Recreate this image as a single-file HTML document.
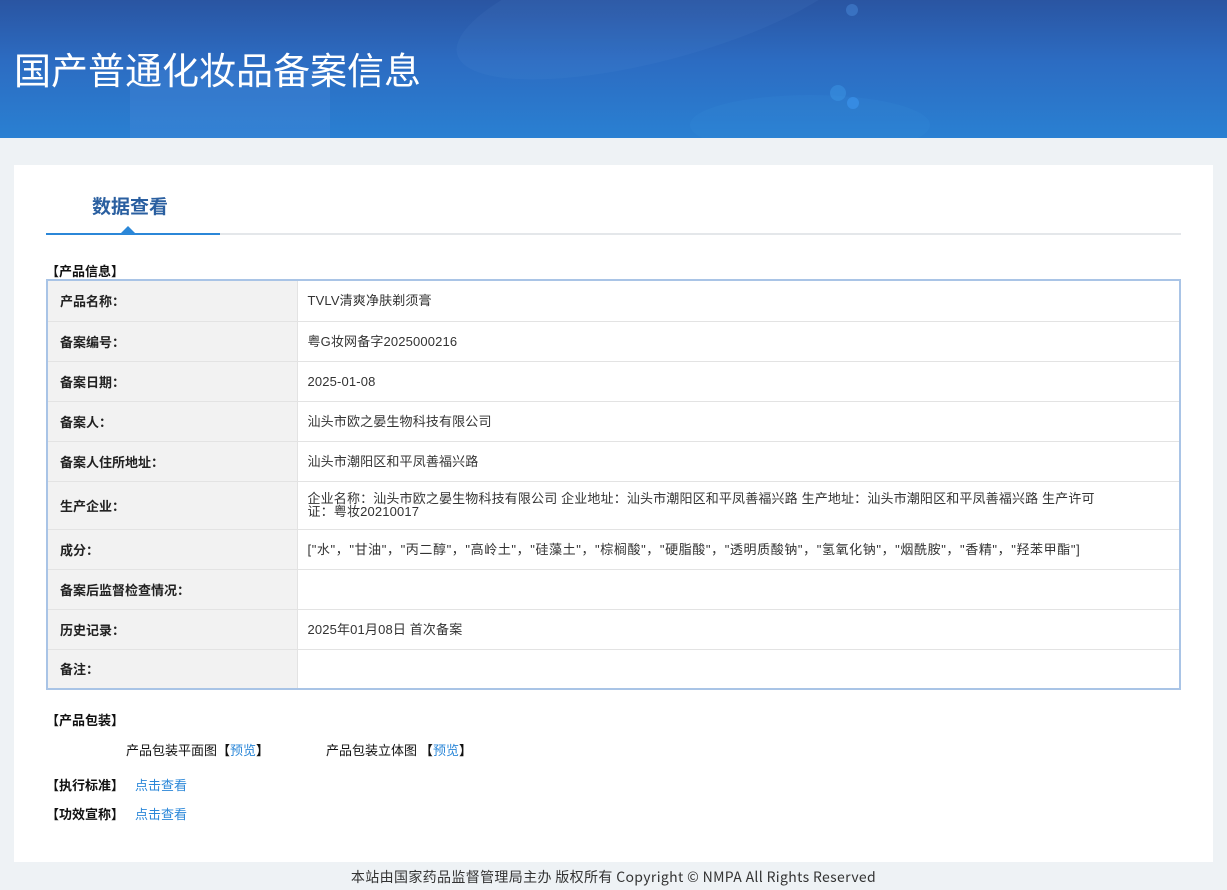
<!DOCTYPE html>
<html><head><meta charset="utf-8"><style>
*{margin:0;padding:0;box-sizing:border-box}
body{width:1227px;height:890px;background:#eef2f5;font-family:"Liberation Sans","Noto Sans CJK SC",sans-serif;position:relative;overflow:hidden;color:#333}
.hd{position:absolute;left:0;top:0;width:1227px;height:138px;background:linear-gradient(180deg,#2a55a2 0%,#2c6cc2 45%,#2a80d2 100%);overflow:hidden}
.hd h1{position:absolute;left:14px;top:41px;font-size:37px;font-weight:normal;color:#fff;font-family:"Noto Sans CJK SC",sans-serif}
.blob{position:absolute;border-radius:50%}
.panel{position:absolute;left:14px;top:165px;width:1199px;height:697px;background:#fff}
.tab{position:absolute;left:92px;top:192px;font-size:19px;font-weight:bold;color:#2a5fa0;font-family:"Noto Sans CJK SC",sans-serif}
.line{position:absolute;left:46px;top:233px;width:1135px;height:2px;background:#e4e7ea}
.line2{position:absolute;left:46px;top:233px;width:174px;height:2px;background:#2b87d8}
.tri{position:absolute;left:121px;top:226px;width:0;height:0;border-left:7px solid transparent;border-right:7px solid transparent;border-bottom:7px solid #2b87d8}
.sec{position:absolute;font-size:13px;font-weight:bold;color:#111;font-family:"Noto Sans CJK SC",sans-serif}
table{position:absolute;left:46px;top:279px;width:1135px;border-collapse:collapse;border:2px solid #a9c4e6;font-size:13px;font-family:"Liberation Sans","Noto Sans CJK SC",sans-serif}
td{border:1px solid #e3e3e3;padding:0 10px;vertical-align:middle}
td.l{width:250px;background:#f2f2f2;font-weight:bold;color:#222;padding-left:12px}
td.v{color:#333;line-height:13px;letter-spacing:.15px}
a{color:#2b87d8;text-decoration:none}
.t{position:absolute;font-size:13px;color:#111;font-family:"Noto Sans CJK SC",sans-serif}
.t b{font-weight:bold}
.ft{position:absolute;left:0;width:1227px;top:867px;text-align:center;font-size:14px;color:#333;font-family:"Noto Sans CJK SC",sans-serif;letter-spacing:.35px}
</style></head><body>
<div class="hd">
<div class="blob" style="left:450px;top:-60px;width:420px;height:120px;transform:rotate(-15deg);background:rgba(120,170,230,.08)"></div>
<div class="blob" style="left:130px;top:70px;width:200px;height:70px;border-radius:0;background:rgba(80,140,220,.25)"></div>
<div class="blob" style="left:690px;top:95px;width:240px;height:60px;background:rgba(60,150,220,.15)"></div>
<div class="blob" style="left:846px;top:4px;width:12px;height:12px;background:rgba(80,150,230,.4)"></div>
<div class="blob" style="left:830px;top:85px;width:16px;height:16px;background:rgba(60,150,230,.5)"></div>
<div class="blob" style="left:847px;top:97px;width:12px;height:12px;background:rgba(60,150,240,.6)"></div>
<h1>国产普通化妆品备案信息</h1>
</div>
<div class="panel"></div>
<div class="tab">数据查看</div>
<div class="line"></div><div class="line2"></div><div class="tri"></div>
<div class="sec" style="left:46px;top:261px">【产品信息】</div>
<table>
<tr style="height:41px"><td class="l">产品名称：</td><td class="v">TVLV清爽净肤剃须膏</td></tr>
<tr style="height:40px"><td class="l">备案编号：</td><td class="v">粤G妆网备字2025000216</td></tr>
<tr style="height:40px"><td class="l">备案日期：</td><td class="v">2025-01-08</td></tr>
<tr style="height:40px"><td class="l">备案人：</td><td class="v">汕头市欧之晏生物科技有限公司</td></tr>
<tr style="height:40px"><td class="l">备案人住所地址：</td><td class="v">汕头市潮阳区和平凤善福兴路</td></tr>
<tr style="height:48px"><td class="l">生产企业：</td><td class="v" style="padding-right:70px">企业名称：汕头市欧之晏生物科技有限公司 企业地址：汕头市潮阳区和平凤善福兴路 生产地址：汕头市潮阳区和平凤善福兴路 生产许可证：粤妆20210017</td></tr>
<tr style="height:40px"><td class="l">成分：</td><td class="v" style="letter-spacing:.6px">["水"，"甘油"，"丙二醇"，"高岭土"，"硅藻土"，"棕榈酸"，"硬脂酸"，"透明质酸钠"，"氢氧化钠"，"烟酰胺"，"香精"，"羟苯甲酯"]</td></tr>
<tr style="height:40px"><td class="l">备案后监督检查情况：</td><td class="v"></td></tr>
<tr style="height:40px"><td class="l">历史记录：</td><td class="v">2025年01月08日 首次备案</td></tr>
<tr style="height:40px"><td class="l">备注：</td><td class="v"></td></tr>
</table>
<div class="sec" style="left:46px;top:710px">【产品包装】</div>
<div class="t" style="left:126px;top:740px">产品包装平面图<b>【</b><a>预览</a><b>】</b></div>
<div class="t" style="left:326px;top:740px">产品包装立体图 <b>【</b><a>预览</a><b>】</b></div>
<div class="sec" style="left:46px;top:775px">【执行标准】</div><div class="t" style="left:135px;top:775px"><a>点击查看</a></div>
<div class="sec" style="left:46px;top:804px">【功效宣称】</div><div class="t" style="left:135px;top:804px"><a>点击查看</a></div>
<div class="ft">本站由国家药品监督管理局主办 版权所有 Copyright © NMPA All Rights Reserved</div>
</body></html>
